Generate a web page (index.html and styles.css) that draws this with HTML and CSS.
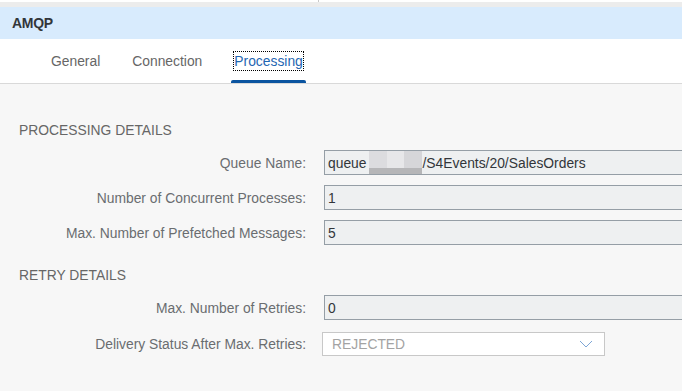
FILE: index.html
```html
<!DOCTYPE html>
<html>
<head>
<meta charset="utf-8">
<link rel="stylesheet" href="styles.css">
</head>
<body>
<div class="topstrip"><div class="topstrip-left"></div></div>
<div class="toolbar"></div>
<header class="title">AMQP</header>
<nav class="tabs">
  <div class="tab">General</div>
  <div class="tab">Connection</div>
  <div class="tab active"><span class="focus">Processing</span></div>
</nav>
<main class="content">
  <h2 class="section">PROCESSING DETAILS</h2>
  <div class="form">
    <label class="label">Queue Name:</label>
    <div class="input"><span>queue</span><span class="redact"><i class="r1"></i><i class="r2"></i><i class="r3"></i></span><span>/S4Events/20/SalesOrders</span></div>
    <label class="label">Number of Concurrent Processes:</label>
    <div class="input"><span>1</span></div>
    <label class="label">Max. Number of Prefetched Messages:</label>
    <div class="input"><span>5</span></div>
  </div>
  <h2 class="section section-retry">RETRY DETAILS</h2>
  <div class="form">
    <label class="label">Max. Number of Retries:</label>
    <div class="input"><span>0</span></div>
    <label class="label label-select">Delivery Status After Max. Retries:</label>
    <div class="select"><span>REJECTED</span>
      <svg class="chev" width="14" height="8" viewBox="0 0 14 8"><path d="M1 1 L7 7 L13 1" fill="none" stroke="#7ea6d6" stroke-width="1"/></svg>
    </div>
  </div>
</main>
</body>
</html>
```
FILE: styles.css
```css
* { box-sizing: border-box; }
html, body { margin: 0; padding: 0; }
body {
  width: 682px;
  height: 391px;
  overflow: hidden;
  background: #f7f7f7;
  font-family: "Liberation Sans", Arial, sans-serif;
  font-size: 13.85px;
  color: #32363a;
}
.topstrip { height: 2px; background: #fff; display: flex; }
.topstrip-left { width: 319px; height: 2px; border-right: 1px solid #c9c9c9; }
.toolbar { height: 5px; background: #ececec; }
.title {
  height: 32px;
  background: #d8ebfd;
  padding-left: 12px;
  line-height: 32px;
  font-weight: bold;
  font-size: 14px;
  letter-spacing: -0.3px;
  color: #32363a;
}
.tabs {
  height: 45px;
  background: #fff;
  border-bottom: 1px solid #d9d9d9;
  display: flex;
  gap: 26px;
  padding-left: 48px;
}
.tab {
  position: relative;
  height: 44px;
  padding: 0 3px;
  display: flex;
  align-items: center;
  color: #666;
}
.tab.active { color: #1f66b2; }
.tab.active::after {
  content: "";
  position: absolute;
  left: 0; right: 0; bottom: 0;
  height: 3px;
  background: #0a54a0;
  border-radius: 2px 2px 0 0;
}
.focus {
  outline: 1px dotted #000;
  padding: 1px 0;
  line-height: 16px;
}
.content { padding: 38px 0 0 0; }
.section {
  margin: 0 0 12px 19px;
  font-size: 13.85px;
  font-weight: normal;
  line-height: 16px;
  color: #666;
}
.section-retry { margin-top: 22px; }
.form {
  display: grid;
  grid-template-columns: 306px 400px;
  column-gap: 18px;
  row-gap: 10px;
  align-items: center;
}
.label {
  text-align: right;
  color: #6a6d70;
  line-height: 16px;
}
.input {
  height: 25px;
  background: #eef0f1;
  border: 1px solid #959ea6;
  padding-left: 3px;
  display: flex;
  align-items: center;
  color: #32363a;
  white-space: nowrap;
}
.redact {
  align-self: stretch;
  width: 53px;
  margin: 0 1px 0 2px;
  display: flex;
  border-bottom: 6px solid #b6b6b8;
}
.redact i { display: block; height: 100%; }
.r1 { width: 18px; background: #dcdcdf; }
.r2 { width: 17px; background: #e7e7e9; }
.r3 { width: 18px; background: #d6d6d9; }
.label-select { margin-top: 2px; }
.select {
  margin-top: 2px;
  margin-left: -2px;
  width: 283px;
  height: 24px;
  background: #fff;
  border: 1px solid #c8c8c8;
  display: flex;
  align-items: center;
  justify-content: space-between;
  padding: 0 11px 0 9px;
  color: #a3a3a3;
}
.chev { display: block; }
```
